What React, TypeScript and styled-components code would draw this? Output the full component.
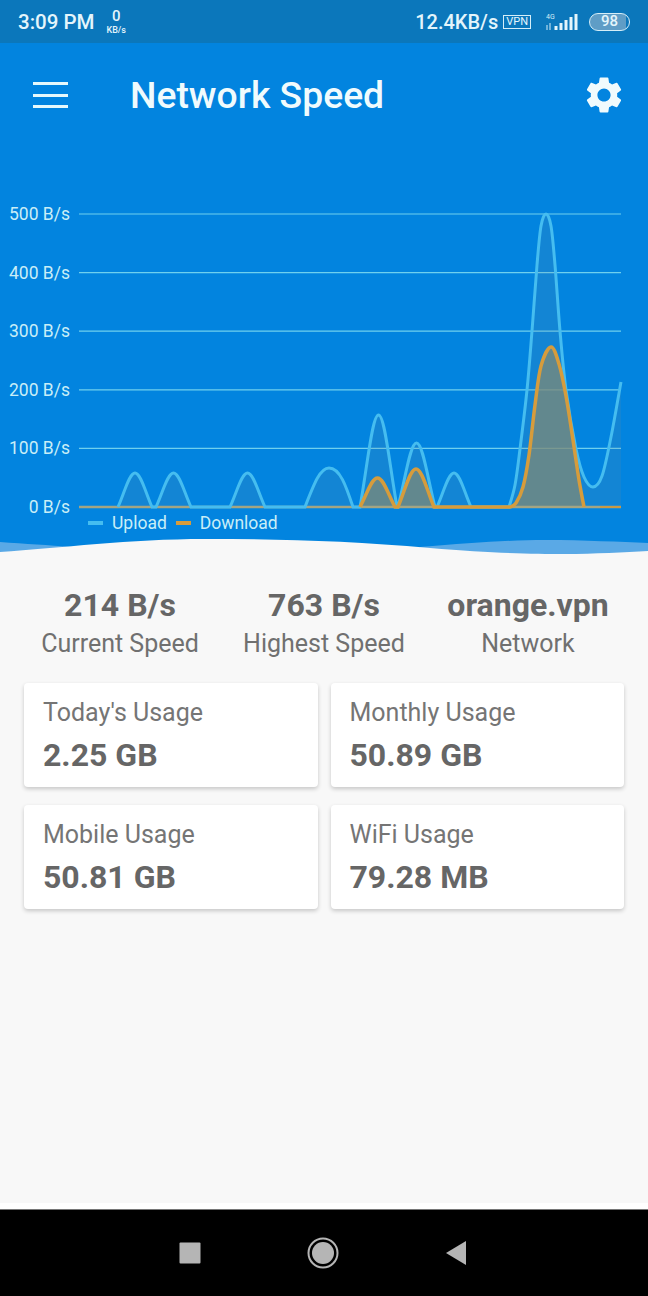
import React from 'react'
import styled, { createGlobalStyle } from 'styled-components'
import { MdSettings } from 'react-icons/md'

const GlobalStyle = createGlobalStyle`
html, body {
    margin: 0;
    padding: 0;
    background: #000;
}
* {
    box-sizing: border-box;
}
`

const Page = styled.div`
display: flex;
flex-direction: column;
width: 648px;
height: 1296px;
overflow: hidden;
font-family: Roboto, "Liberation Sans", sans-serif;
background: #f8f8f8;
`

const StatusBar = styled.div`
display: flex;
align-items: center;
height: 43px;
padding: 0 18px;
background: #0b77bb;
color: #e4f5fb;
`

const Clock = styled.span`
font-size: 20.5px;
font-weight: 500;
`

const NetRate = styled.div`
display: flex;
flex-direction: column;
align-items: center;
margin-left: 12px;
font-size: 15px;
font-weight: 500;
line-height: 18px;
span {
    font-size: 9px;
    line-height: 11px;
}
`

const StatusRight = styled.div`
display: flex;
align-items: center;
margin-left: auto;
`

const Speed = styled.span`
font-size: 20px;
font-weight: 500;
`

const VpnBadge = styled.span`
margin-left: 5px;
padding: 0 2px;
height: 14px;
border: 1px solid #d5eef8;
font-size: 11px;
line-height: 12px;
`

const Signal = styled.svg`
display: block;
margin-left: 15px;
`

const Battery = styled.span`
width: 41px;
height: 18px;
margin-left: 9px;
border: 1.5px solid #d5eef8;
border-radius: 9px;
background: linear-gradient(90deg, #5f9dc6 92%, transparent 92%);
font-size: 15px;
font-weight: 500;
line-height: 15px;
text-align: center;
`

const Hero = styled.div`
background: #0284df;
height: 513px;
display: flex;
flex-direction: column;
`

const Toolbar = styled.div`
display: flex;
align-items: center;
height: 104px;
padding: 0 22px 0 33px;
color: #f0fbfd;
`

const Burger = styled.div`
display: flex;
flex-direction: column;
gap: 8.5px;
width: 35px;
span {
    display: block;
    height: 3px;
    background: #e6f9fc;
}
`

const Title = styled.h1`
flex: 1;
margin: 0 0 0 62px;
font-size: 37.3px;
font-weight: 500;
`

const Chart = styled.svg`
display: block;
margin-top: 53px;
font-family: Roboto, "Liberation Sans", sans-serif;
`

const Legend = styled.div`
display: flex;
align-items: center;
height: 17px;
margin-top: -5px;
padding-left: 88px;
color: #c9eef7;
font-size: 17.5px;
`

const Swatch = styled.i<{ $color: string }>`
width: 15px;
height: 4px;
margin-right: 9px;
background: ${p => p.$color};
`

const LegendLabel = styled.span`
margin-right: 9px;
`

const Wave = styled.svg`
display: block;
margin-top: auto;
`

const Main = styled.div`
flex: 1;
padding-top: 30px;
background: #f8f8f8;
color: #666;
`

const Stats = styled.div`
display: grid;
grid-template-columns: repeat(3, 1fr);
padding: 0 18px;
text-align: center;
`

const StatValue = styled.div`
font-size: 32px;
font-weight: 700;
line-height: 38px;
`

const StatLabel = styled.div`
font-size: 25px;
line-height: 39px;
color: #707070;
`

const Cards = styled.div`
display: grid;
grid-template-columns: 1fr 1fr;
gap: 18px 13px;
margin-top: 20px;
padding: 0 24px;
`

const Card = styled.div`
height: 104px;
padding: 13px 19px;
background: #fff;
border-radius: 4px;
box-shadow: 0 2px 4px rgba(0, 0, 0, 0.2);
`

const CardLabel = styled.div`
font-size: 25px;
line-height: 33px;
color: #757575;
`

const CardValue = styled.div`
margin-top: 7px;
font-size: 32px;
font-weight: 700;
line-height: 38px;
`

const WhiteStrip = styled.div`
height: 6px;
background: #fff;
`

const NavBar = styled.div`
display: flex;
align-items: center;
justify-content: center;
gap: 106px;
height: 87px;
padding-right: 3px;
border-top: 1px solid #777;
background: #000;
`

const NavIcon = styled.svg`
display: block;
`

const ticks = [500, 400, 300, 200, 100, 0]
const tickY = (v: number) => 507 - v * 0.586

const stats = [
    { value: '214 B/s', label: 'Current Speed' },
    { value: '763 B/s', label: 'Highest Speed' },
    { value: 'orange.vpn', label: 'Network' },
]

const usage = [
    { label: "Today's Usage", value: '2.25 GB' },
    { label: 'Monthly Usage', value: '50.89 GB' },
    { label: 'Mobile Usage', value: '50.81 GB' },
    { label: 'WiFi Usage', value: '79.28 MB' },
]

const bump = (x0: number, x1: number, top: number) => {
    const w = x1 - x0
    const h = 507 - top
    const c = (x0 + x1) / 2
    return `L${x0} 507 C${x0 + w * 0.2} ${507 - h * 0.45} ${c - w * 0.17} ${top} ${c} ${top} C${c + w * 0.17} ${top} ${x1 - w * 0.2} ${507 - h * 0.45} ${x1} 507`
}

// catmull-rom through the points read off the picture
const smooth = (pts: number[][]) => {
    let d = `L${pts[0][0]} ${pts[0][1]}`
    for (let i = 0; i < pts.length - 1; i++) {
        const p0 = pts[Math.max(i - 1, 0)]
        const p1 = pts[i]
        const p2 = pts[i + 1]
        const p3 = pts[Math.min(i + 2, pts.length - 1)]
        const c1x = p1[0] + (p2[0] - p0[0]) / 6
        const c1y = p1[1] + (p2[1] - p0[1]) / 6
        const c2x = p2[0] - (p3[0] - p1[0]) / 6
        const c2y = p2[1] - (p3[1] - p1[1]) / 6
        d += ` C${c1x} ${c1y} ${c2x} ${c2y} ${p2[0]} ${p2[1]}`
    }
    return d
}

const uploadLine = [
    'M118 507',
    bump(118, 152, 473),
    bump(156, 191, 473),
    bump(230, 265, 473),
    'L305 507 C314 484 320 468 329 468 C340 468 346 486 353 507',
    bump(360, 397, 415),
    bump(398, 435, 443),
    bump(437, 471, 473),
    smooth([[509, 507], [515, 485], [520, 449], [527, 390], [532, 331], [537, 265], [541, 226], [546, 214], [551, 226], [555, 265], [560, 331], [566, 390], [576, 449], [584, 477], [593, 487], [602, 476], [611, 437], [621, 382]]),
].join(' ')

const downloadLine = [
    'M360 507',
    bump(360, 395, 478),
    bump(398, 434, 469),
    smooth([[510, 507], [516, 503], [523, 487], [529, 455], [535, 405], [541, 366], [551, 347], [559, 364], [566, 396], [573, 440], [579, 480], [584, 507]]),
].join(' ')

const App: React.FC = () => {
    return (
        <Page>
            <GlobalStyle />
            <StatusBar>
                <Clock>3:09 PM</Clock>
                <NetRate>0<span>KB/s</span></NetRate>
                <StatusRight>
                    <Speed>12.4KB/s</Speed>
                    <VpnBadge>VPN</VpnBadge>
                    <Signal width="34" height="20" viewBox="0 0 34 20">
                        <text x="0" y="7" fontSize="7" fill="#d5eef8">4G</text>
                        <path d="M1 13v5M4 11v7" stroke="#d5eef8" strokeWidth="1" />
                        <path d="M10 14v4M15 11v7M20 8v10M25 5v13M30 2v16" stroke="#e4f5fb" strokeWidth="3" />
                    </Signal>
                    <Battery>98</Battery>
                </StatusRight>
            </StatusBar>
            <Hero>
                <Toolbar>
                    <Burger><span /><span /><span /></Burger>
                    <Title>Network Speed</Title>
                    <MdSettings size={44} color="#f0fbfd" />
                </Toolbar>
                <Chart width="648" height="319" viewBox="0 200 648 319">
                    {ticks.map(t => (
                        <g key={t}>
                            <text x="70" y={tickY(t) + 6} textAnchor="end" fontSize="17.5" fill="#c9eef7">{t} B/s</text>
                            {t > 0 && <line x1="79" x2="621" y1={tickY(t)} y2={tickY(t)} stroke="#6fd0ee" strokeWidth="1.2" />}
                        </g>
                    ))}
                    <path d={`${uploadLine} L621 507 Z`} fill="#6f8f9a" fillOpacity="0.16" />
                    <path d={`${downloadLine} Z`} fill="#7d8a77" fillOpacity="0.75" />
                    <line x1="79" x2="621" y1="507" y2="507" stroke="#a3a583" strokeWidth="2.4" />
                    <path d={uploadLine} fill="none" stroke="#45bdf0" strokeWidth="3" />
                    <path d={downloadLine} fill="none" stroke="#d69c3c" strokeWidth="3.5" />
                    <path d="M600 507H621" stroke="#c99a45" strokeWidth="2" />
                </Chart>
                <Legend>
                    <Swatch $color="#45bdf0" />
                    <LegendLabel>Upload</LegendLabel>
                    <Swatch $color="#d69c3c" />
                    <LegendLabel>Download</LegendLabel>
                </Legend>
                <Wave width="648" height="22" viewBox="0 534 648 22">
                    <path d="M0 542 C25 544 50 545 70 547 L0 556 Z" fill="#5aa9e6" />
                    <path d="M420 547 C470 543 510 540 545 540 C585 540 620 542 648 543 V556 H420 Z" fill="#5aa9e6" />
                    <path d="M0 552 C60 548 130 539 205 539 C280 539 350 541 430 548 C490 553 530 554 565 554 C595 554 625 552 648 551 V556 H0 Z" fill="#f8f8f8" />
                </Wave>
            </Hero>
            <Main>
                <Stats>
                    {stats.map(s => (
                        <div key={s.label}>
                            <StatValue>{s.value}</StatValue>
                            <StatLabel>{s.label}</StatLabel>
                        </div>
                    ))}
                </Stats>
                <Cards>
                    {usage.map(u => (
                        <Card key={u.label}>
                            <CardLabel>{u.label}</CardLabel>
                            <CardValue>{u.value}</CardValue>
                        </Card>
                    ))}
                </Cards>
            </Main>
            <WhiteStrip />
            <NavBar>
                <NavIcon width="22" height="22" viewBox="0 0 22 22">
                    <rect x="0.5" y="0.5" width="21" height="21" rx="1" fill="#b5b5b5" />
                </NavIcon>
                <NavIcon width="32" height="32" viewBox="0 0 32 32">
                    <circle cx="16" cy="16" r="14.5" fill="none" stroke="#b5b5b5" strokeWidth="2" />
                    <circle cx="16" cy="16" r="11" fill="#b5b5b5" />
                </NavIcon>
                <NavIcon width="22" height="26" viewBox="0 0 22 26">
                    <path d="M1 13 L21 1 V25 Z" fill="#b5b5b5" />
                </NavIcon>
            </NavBar>
        </Page>
    )
}

export default App
